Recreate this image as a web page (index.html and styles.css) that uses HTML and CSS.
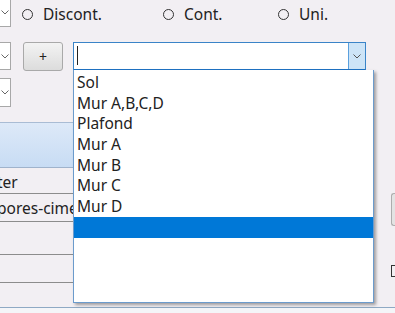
FILE: index.html
```html
<!DOCTYPE html>
<html lang="fr">
<head>
    <meta charset="UTF-8">
    <title>Surfaces</title>
    <link rel="stylesheet" href="styles.css">
</head>
<body>
    <div class="form">
        <div class="line top">
            <div class="stub first"><svg width="8" height="5" viewBox="0 0 8 5"><path d="M0.5 0.5 L4 4 L7.5 0.5" fill="none" stroke="#666" stroke-width="1"/></svg></div>
            <label class="radio"><span class="dot"></span>Discont.</label>
            <label class="radio"><span class="dot"></span>Cont.</label>
            <label class="radio"><span class="dot"></span>Uni.</label>
        </div>
        <div class="line mid">
            <div class="stub"><svg width="8" height="5" viewBox="0 0 8 5"><path d="M0.5 0.5 L4 4 L7.5 0.5" fill="none" stroke="#666" stroke-width="1"/></svg></div>
            <button class="plus">+</button>
            <div class="combo">
                <span class="caret"></span>
                <span class="drop"><svg width="8" height="5" viewBox="0 0 8 5"><path d="M0.5 0.5 L4 4 L7.5 0.5" fill="none" stroke="#555" stroke-width="1"/></svg></span>
                <ul class="list">
                    <li>Sol</li>
                    <li>Mur A,B,C,D</li>
                    <li>Plafond</li>
                    <li>Mur A</li>
                    <li>Mur B</li>
                    <li>Mur C</li>
                    <li>Mur D</li>
                    <li class="selected">&nbsp;</li>
                </ul>
            </div>
        </div>
        <div class="line third">
            <div class="stub"><svg width="8" height="5" viewBox="0 0 8 5"><path d="M0.5 0.5 L4 4 L7.5 0.5" fill="none" stroke="#666" stroke-width="1"/></svg></div>
        </div>
        <div class="lower">
            <div class="grid">
                <div class="head"></div>
                <div class="cell r1"><span class="clip">ter</span></div>
                <div class="cell r2"><span class="clip">pores-ciment</span></div>
                <div class="cell r3"></div>
                <div class="cell r4"></div>
                <div class="cell r5"></div>
            </div>
            <div class="side">
                <div class="btn-edge"></div>
                <div class="check-edge"></div>
            </div>
        </div>
        <div class="status"></div>
    </div>
</body>
</html>
```

FILE: styles.css
```css
body {
    margin: 0;
    background: #f2eff3;
    font-family: "Noto Sans", "Open Sans", sans-serif;
    font-size: 15.5px;
    color: #222;
    overflow: hidden;
}

.form {
    width: 395px;
    height: 313px;
    display: flex;
    flex-direction: column;
}
.form > * {
    flex-shrink: 0;
}

.line {
    display: flex;
    align-items: center;
}

/* combo boxes cut by the left edge */
.stub {
    width: 11px;
    height: 29px;
    box-sizing: border-box;
    background: #fff;
    border: 1px solid #a8a8a8;
    border-left: none;
    display: flex;
    align-items: center;
    padding-left: 1px;
    flex-shrink: 0;
}
.stub.first {
    margin-top: -2px;
    height: 29px;
    border-top: none;
}

.top {
    height: 27px;
}

.radio {
    display: flex;
    align-items: center;
    height: 27px;
    line-height: 27px;
    padding-top: 2px;
    box-sizing: border-box;
}
.radio:nth-child(2) { margin-left: 11px; width: 141px; }
.radio:nth-child(3) { width: 115px; }

.dot {
    width: 11px;
    height: 11px;
    box-sizing: border-box;
    border: 1px solid #333;
    border-radius: 50%;
    margin-right: 10px;
}

.mid {
    margin-top: 15px;
    height: 29px;
    align-items: flex-start;
}
.mid .stub { height: 28px; }

.plus {
    margin-left: 12px;
    width: 40px;
    height: 29px;
    border: 1px solid #a9a9a9;
    border-radius: 3px;
    background: linear-gradient(#f3f3f3, #dcdcdc);
    font-family: inherit;
    font-size: 14px;
    color: #222;
    padding: 0;
}

.combo {
    position: relative;
    margin-left: 10px;
    width: 293px;
    height: 29px;
    box-sizing: border-box;
    background: #fff;
    border: 1px solid #3a84c8;
    border-bottom: 2px solid #1f72c4;
}

.caret {
    position: absolute;
    left: 3px;
    top: 3px;
    width: 1px;
    height: 19px;
    background: #222;
}

.drop {
    position: absolute;
    right: 0;
    top: 0;
    width: 16px;
    height: 26px;
    background: #cde4f7;
    border-left: 1px solid #5aa0de;
    display: flex;
    align-items: center;
    justify-content: center;
}

.list {
    position: absolute;
    left: -1px;
    top: 27px;
    width: 301px;
    height: 233px;
    box-sizing: border-box;
    margin: 0;
    padding: 2px 0 0;
    list-style: none;
    background: #fff;
    border: 1px solid #6b9bcc;
    border-top: none;
    box-shadow: 2px 2px 3px rgba(0, 0, 0, 0.35);
    z-index: 2;
}
.list li {
    height: 20.7px;
    line-height: 20.7px;
    padding-left: 3px;
    white-space: nowrap;
}
.list li.selected {
    background: #0078d7;
}

.third {
    margin-top: 7px;
}

.lower {
    display: flex;
    margin-top: 15px;
    height: 185px;
}

.grid {
    width: 73px;
    display: flex;
    flex-direction: column;
}
.grid > * {
    flex-shrink: 0;
}
.head {
    height: 46px;
    box-sizing: border-box;
    border-top: 1px solid #a9bcd4;
    border-bottom: 1px solid #9fb3cc;
    background: linear-gradient(#dde9f8, #c7dcf4);
}
.cell {
    box-sizing: border-box;
    border-bottom: 1px solid #8c8c8c;
    white-space: nowrap;
    overflow: hidden;
    display: flex;
    align-items: center;
}
.r1 { height: 26px; padding-top: 3px; }
.r2 { height: 28px; }
.r3 { height: 33px; }
.r4 { height: 28px; }
.r5 { height: 24px; border-bottom: none; }
.clip { margin-left: -3px; }

.side {
    flex: 1;
    display: flex;
    flex-direction: column;
    align-items: flex-end;
}
.btn-edge {
    margin-top: 71px;
    width: 4px;
    height: 33px;
    box-sizing: border-box;
    border: 1px solid #adadad;
    border-right: none;
    border-radius: 3px 0 0 3px;
    background: #e3e3e3;
}
.check-edge {
    margin-top: 39px;
    width: 4px;
    height: 12px;
    box-sizing: border-box;
    border: 1px solid #333;
    border-right: none;
}

.status {
    border-top: 1px solid #8fa9c4;
    flex: 1;
    background: #f4f5f8;
}
```
